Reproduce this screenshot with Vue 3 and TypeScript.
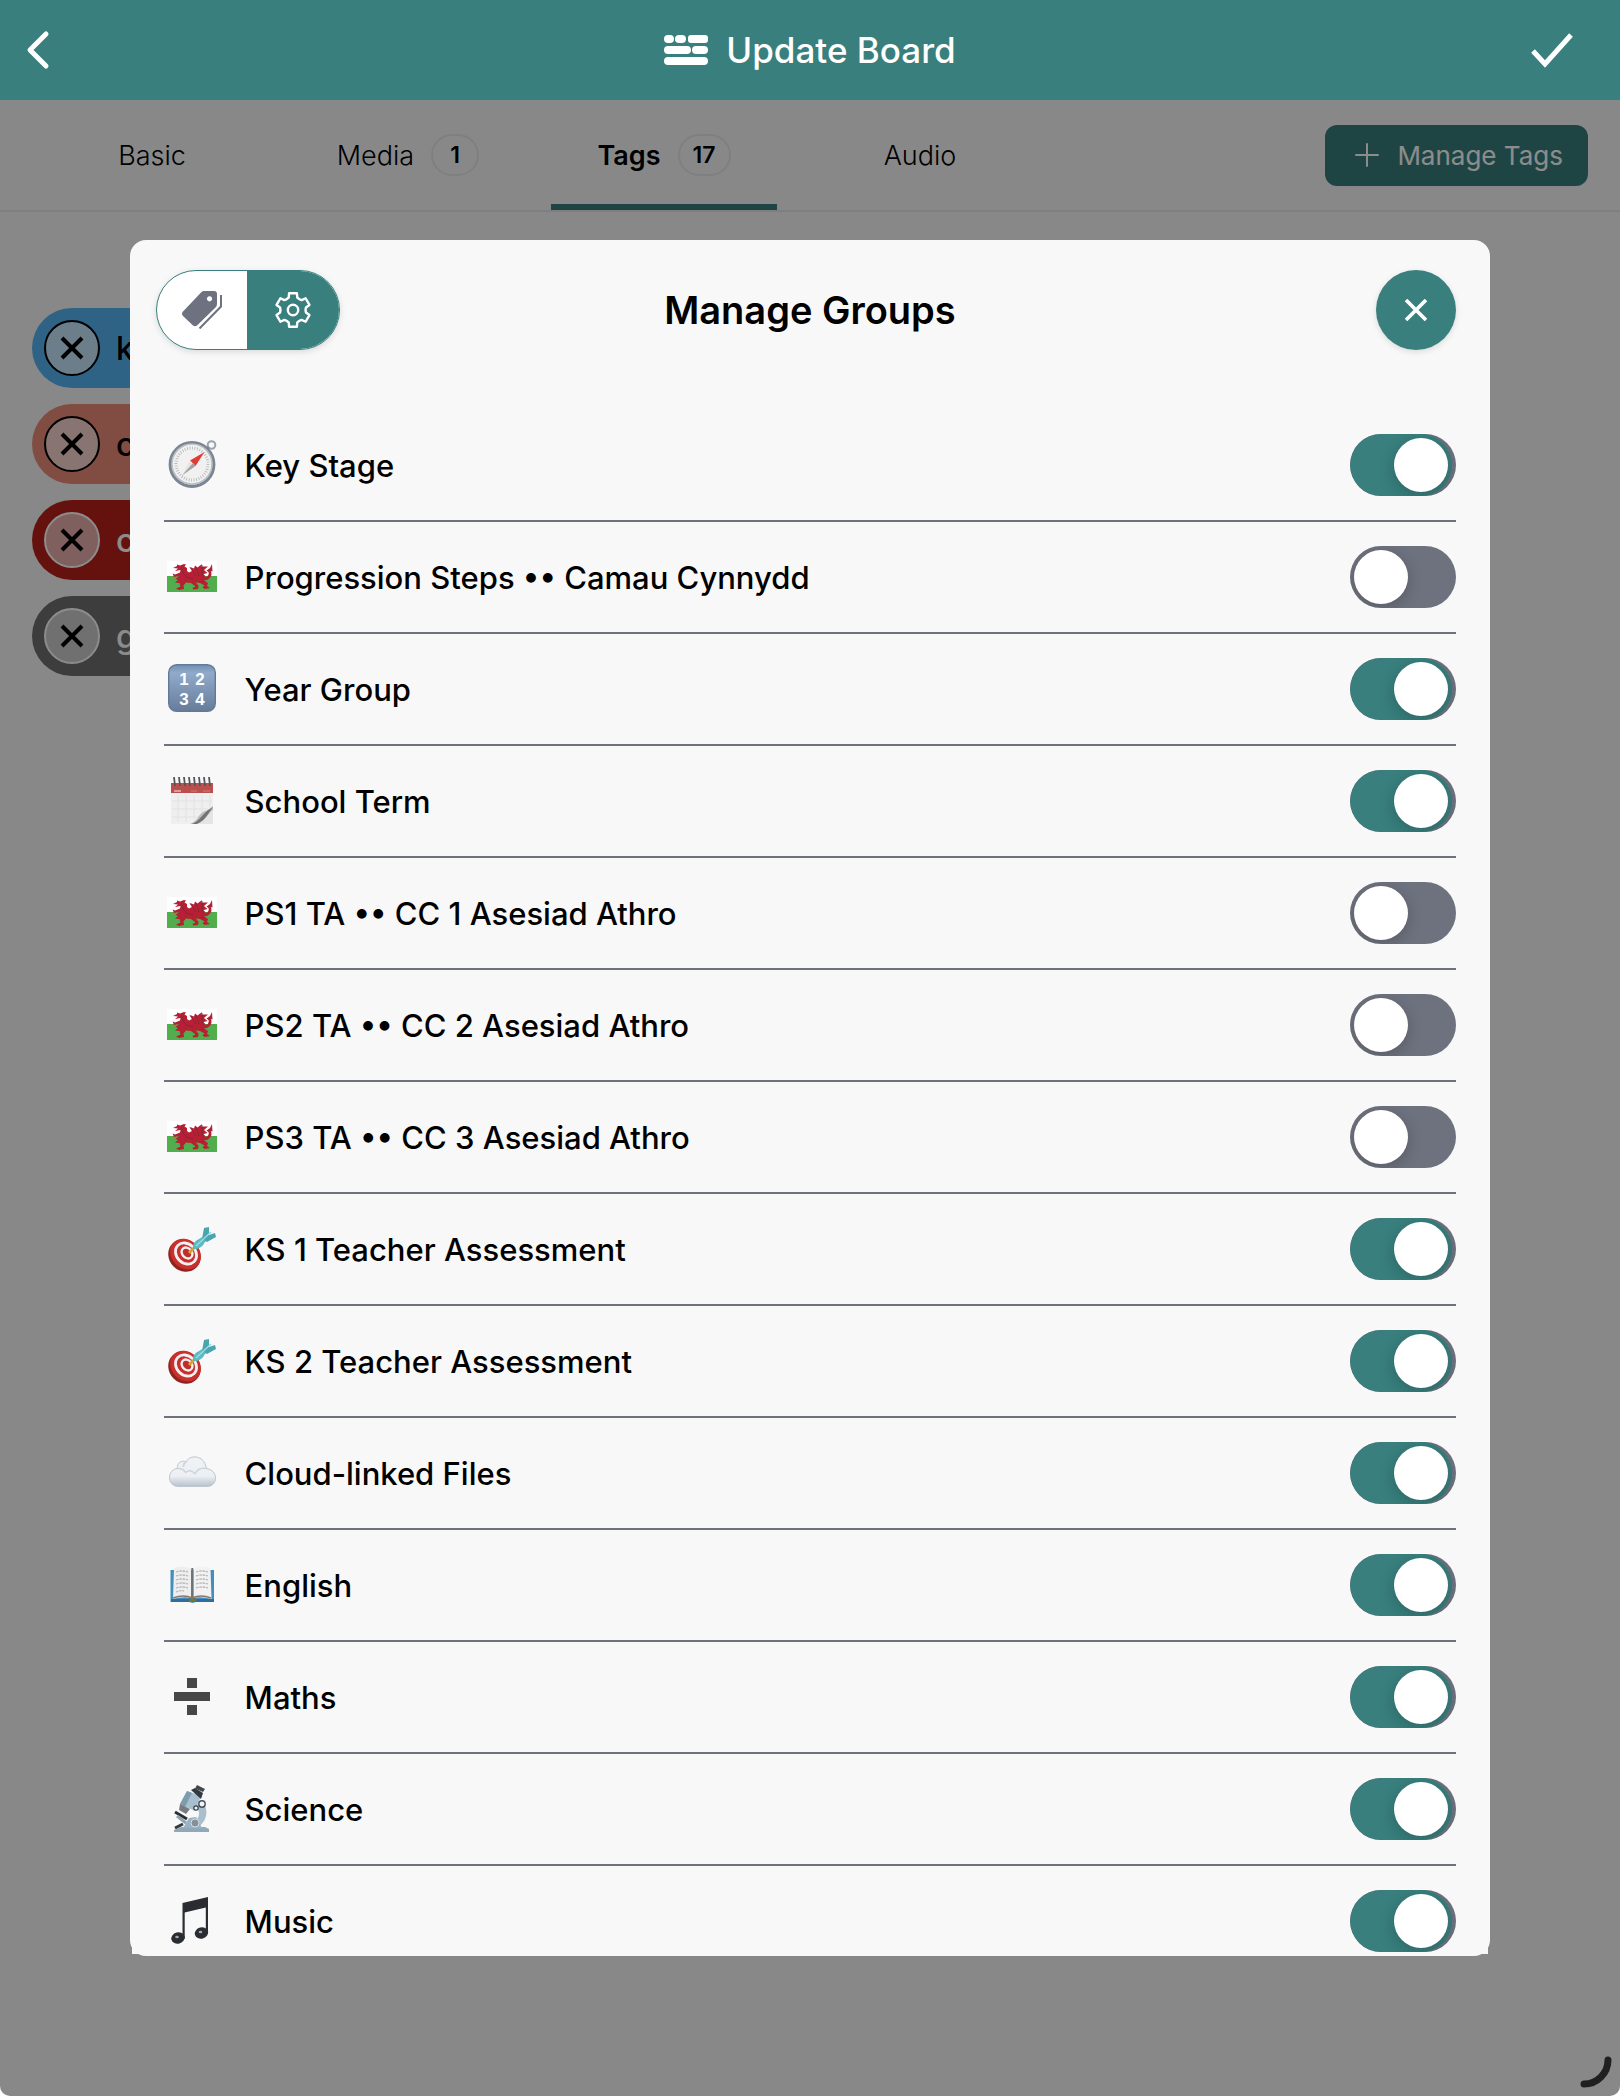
<script setup lang="ts">
import { ref } from 'vue'

interface Tab {
  label: string
  count?: number
}

interface Group {
  icon: string
  label: string
  on: boolean
}

const tabs: Tab[] = [
  { label: 'Basic' },
  { label: 'Media', count: 1 },
  { label: 'Tags', count: 17 },
  { label: 'Audio' },
]
const activeTab = ref('Tags')

const chips = [
  { text: 'k', tone: 'blue' },
  { text: 'c', tone: 'salmon' },
  { text: 'c', tone: 'red' },
  { text: 'g', tone: 'grey' },
]

const groups = ref<Group[]>([
  { icon: 'compass', label: 'Key Stage', on: true },
  { icon: 'wales', label: 'Progression Steps •• Camau Cynnydd', on: false },
  { icon: 'numbers', label: 'Year Group', on: true },
  { icon: 'calendar', label: 'School Term', on: true },
  { icon: 'wales', label: 'PS1 TA •• CC 1 Asesiad Athro', on: false },
  { icon: 'wales', label: 'PS2 TA •• CC 2 Asesiad Athro', on: false },
  { icon: 'wales', label: 'PS3 TA •• CC 3 Asesiad Athro', on: false },
  { icon: 'target', label: 'KS 1 Teacher Assessment', on: true },
  { icon: 'target', label: 'KS 2 Teacher Assessment', on: true },
  { icon: 'cloud', label: 'Cloud-linked Files', on: true },
  { icon: 'book', label: 'English', on: true },
  { icon: 'divide', label: 'Maths', on: true },
  { icon: 'microscope', label: 'Science', on: true },
  { icon: 'music', label: 'Music', on: true },
])

// Outline of a six-toothed gear centred on (19, 19)
function gearPoints(): string {
  const corners: [number, number][] = [
    [-28, 12.6],
    [-19, 13.2],
    [-13, 17.2],
    [13, 17.2],
    [19, 13.2],
    [28, 12.6],
  ]
  const out: string[] = []
  for (let tooth = 0; tooth < 6; tooth++) {
    for (const [offset, radius] of corners) {
      const a = ((tooth * 60 + offset) * Math.PI) / 180
      out.push(`${(19 + radius * Math.sin(a)).toFixed(2)},${(19 - radius * Math.cos(a)).toFixed(2)}`)
    }
  }
  return out.join(' ')
}
const gear = gearPoints()
const calendarRings = [8, 13, 18, 23, 28, 33, 38, 43]
</script>

<template>
  <div class="screen">
    <header class="topbar">
      <button class="icon-btn" type="button" aria-label="Back">
        <svg width="28" height="44" viewBox="0 0 28 44"><path d="M22 6 L6 22 L22 38" fill="none" stroke="#fff" stroke-width="5" stroke-linecap="round" stroke-linejoin="round" /></svg>
      </button>
      <h1 class="topbar-title">
        <svg width="44" height="30" viewBox="0 0 44 30" fill="#fff">
          <rect x="0" y="0" width="10" height="8" rx="4" />
          <rect x="11" y="0" width="11" height="8" rx="4" />
          <rect x="24" y="0" width="20" height="8" rx="3" />
          <rect x="0" y="11" width="27" height="8" rx="4" />
          <rect x="28" y="11" width="16" height="8" rx="4" />
          <rect x="0" y="22" width="44" height="8" rx="4" />
        </svg>
        Update Board
      </h1>
      <button class="icon-btn" type="button" aria-label="Save">
        <svg width="44" height="40" viewBox="0 0 44 40"><path d="M3 21 L15 34 L41 5" fill="none" stroke="#fff" stroke-width="5" /></svg>
      </button>
    </header>

    <main class="content">
      <div class="tabbar">
        <nav class="tabs">
          <button
            v-for="tab in tabs"
            :key="tab.label"
            type="button"
            class="tab"
            :class="{ active: tab.label === activeTab }"
            @click="activeTab = tab.label"
          >
            <span>{{ tab.label }}</span>
            <span v-if="tab.count" class="count">{{ tab.count }}</span>
          </button>
        </nav>
        <button class="manage" type="button">
          <svg width="24" height="24" viewBox="0 0 24 24"><path d="M12 1 V23 M1 12 H23" stroke="currentColor" stroke-width="2" stroke-linecap="round" /></svg>
          Manage Tags
        </button>
      </div>

      <ul class="chips">
        <li v-for="(chip, i) in chips" :key="i" class="chip" :class="chip.tone">
          <button class="chip-x" type="button" aria-label="Remove tag">
            <svg width="24" height="24" viewBox="0 0 24 24"><path d="M2 2 L22 22 M22 2 L2 22" stroke="#000" stroke-width="4" /></svg>
          </button>
          <span>{{ chip.text }}</span>
        </li>
      </ul>

      <div class="backdrop">
        <section class="modal" role="dialog" aria-labelledby="dialog-title">
          <div class="modal-head">
            <div class="segmented">
              <button class="seg" type="button" aria-label="Tags">
                <svg width="40" height="38" viewBox="0 0 40 38">
                  <path fill-rule="evenodd" d="M22 0 H32 Q35 0 35 3 V13 Q35 15 33.500 16.500 L15 34.500 Q13 36 11 34.500 L1 25 Q-1 22.500 1 20.500 L19.500 1 Q20.500 0 22 0 Z M27.500 5.200 a2.600 2.600 0 1 0 0.010 0 Z" fill="#6e7280" />
                  <path d="M39 4 V15.500 L17.500 37.500" fill="none" stroke="#6e7280" stroke-width="2" />
                </svg>
              </button>
              <button class="seg selected" type="button" aria-label="Groups">
                <svg width="38" height="38" viewBox="0 0 38 38" fill="none" stroke="#fff" stroke-width="2.400" stroke-linejoin="round">
                  <polygon :points="gear" />
                  <circle cx="19" cy="19" r="5.200" />
                </svg>
              </button>
            </div>
            <h2 id="dialog-title">Manage Groups</h2>
            <button class="close" type="button" aria-label="Close">
              <svg width="22" height="22" viewBox="0 0 22 22"><path d="M1 1 L21 21 M21 1 L1 21" stroke="#fff" stroke-width="3.600" /></svg>
            </button>
          </div>

          <div class="list-wrap">
            <ul class="list">
              <li v-for="(group, i) in groups" :key="i">
                <label class="row">
                  <svg class="emoji" width="50" height="50" viewBox="0 0 50 50" aria-hidden="true">
                    <g v-if="group.icon === 'compass'">
                      <circle cx="44.500" cy="5" r="3.800" fill="none" stroke="#9ca3ae" stroke-width="2" />
                      <path d="M37 11 L42 7" stroke="#858d98" stroke-width="3" />
                      <circle cx="25" cy="24.500" r="21.800" fill="#e9e9e9" stroke="#7b8491" stroke-width="3.200" />
                      <circle cx="25" cy="24" r="20" fill="#f1f1f1" stroke="#b9bfc6" stroke-width="1.600" />
                      <circle cx="25" cy="24" r="16" fill="none" stroke="#b5b5b5" stroke-width="3" stroke-dasharray="0.800 1.700" />
                      <path d="M37.500 12 L28.500 26 L23 20.500 Z" fill="#e23a35" />
                      <path d="M15 35.500 L28.500 26 L23 20.500 Z" fill="#e4e4e4" />
                      <path d="M15 35.500 L28.500 26 L26 23 Z" fill="#a2a2a2" />
                    </g>
                    <g v-else-if="group.icon === 'wales'">
                      <rect y="9" width="50" height="16" fill="#fff" />
                      <rect y="24" width="50" height="16" fill="#52ad4d" />
                      <path
                        d="M6 16 L10 14 L10 12.500 L13 13.500 L17 12 L19 12.500 L17.500 14.500 L20 16 L20 19 L22 20.500 L25 19 L23 15 L27 16.500 L28 13.500 L30.500 15.500 L35 12 L34.500 14.500 L41 14.500 L37 18 L40.500 21 L36.500 22 L39 25 Q42.500 23.500 41.500 20 L39.500 18.500 L43 16 L45 12 L45.500 19.500 L44 19 Q46 25 40 28 L37 28.500 L41 31 L40 34 L43 36 L38 37 L35.500 35.500 L37.500 33.500 L33 31 L29 30.500 L31.500 34 L31 37 L26.500 37.500 L25.500 36 L28.500 34.500 L24 31 L19 30.500 L16.500 33.500 L17 37 L12 38 L9 36.500 L13.500 34.500 L12.500 31 L8 30.500 L11 28 L8.500 27 L12 24 L7 25 L5.500 21.500 L8 22.500 L13 20.500 L13.500 18 L8 19 L11 16.500 Z"
                        fill="#b71f34"
                      />
                      <path d="M15 16 L16 21 L19 25 L26 27 M23 15.500 L29 24 M28.500 14.500 L32 24 M35 13 L35.500 24 M34 29 L37 30" fill="none" stroke="#7c2934" stroke-width="0.800" />
                    </g>
                    <g v-else-if="group.icon === 'numbers'">
                      <defs>
                        <linearGradient id="tile" x1="0" y1="0" x2="0" y2="1">
                          <stop offset="0" stop-color="#718fb1" />
                          <stop offset="0.180" stop-color="#91aacb" />
                          <stop offset="1" stop-color="#667c99" />
                        </linearGradient>
                      </defs>
                      <rect x="1.700" y="0.700" width="46.600" height="46.600" rx="8" fill="url(#tile)" stroke="#627a98" stroke-width="1.400" />
                      <g class="digits">
                        <text x="17" y="21">1</text>
                        <text x="33" y="21">2</text>
                        <text x="17" y="41">3</text>
                        <text x="33" y="41">4</text>
                      </g>
                    </g>
                    <g v-else-if="group.icon === 'calendar'">
                      <rect x="4" y="7" width="42" height="41" fill="#efefef" />
                      <path d="M11 19 V46 M19 19 V46 M27 19 V44 M35 19 V38 M43 19 V32 M5 25 H45 M5 33 H41 M5 41 H32" stroke="#e2e2e2" stroke-width="1" />
                      <rect x="4" y="7" width="42" height="10" fill="#b9504e" />
                      <path d="M7 15 H14" stroke="#dc9d9a" stroke-width="2" />
                      <path d="M24 15 H30 M36 15 H43" stroke="#c76f6c" stroke-width="1.400" />
                      <path v-for="x in calendarRings" :key="x" :d="`M${x} 10 L${x - 1} 1`" stroke="#53565b" stroke-width="1.800" />
                      <path d="M23 48 C31 45 31 39 36 36 C40 34 43 33 46 30 V48 Z" fill="#bcbcbc" />
                      <path d="M25 48 C34 44 34 38 46 31 C41 37 39 44 30 48 Z" fill="#737373" />
                      <path d="M30 48 C39 45 41 37 46 34 V48 Z" fill="#e5e5e5" />
                    </g>
                    <g v-else-if="group.icon === 'target'">
                      <ellipse cx="17.500" cy="31.500" rx="17" ry="15.500" transform="rotate(45 17.500 31.500)" fill="#912321" />
                      <ellipse cx="18.500" cy="30" rx="16.500" ry="14" transform="rotate(45 18.500 30)" fill="#c7302c" />
                      <ellipse cx="19" cy="29.500" rx="11.500" ry="9.500" transform="rotate(45 19 29.500)" fill="none" stroke="#f5eeee" stroke-width="2.800" />
                      <ellipse cx="20" cy="29" rx="6" ry="4.800" transform="rotate(45 20 29)" fill="#bb302c" stroke="#f5eeee" stroke-width="2.400" />
                      <path d="M22 29 L30 21" stroke="#d3a534" stroke-width="3" />
                      <path d="M26 25 Q25 18 32 15 L39 11 L41 14 L38 18 Q34 26 26 25 Z" fill="#5cbac4" />
                      <path d="M35 15 L37 4 L42 3 L42 11 L48 9 L49 13 L40 18 Z" fill="#4ba5b0" />
                      <path d="M29 22 L44 8" stroke="#93dce2" stroke-width="1.600" />
                    </g>
                    <g v-else-if="group.icon === 'cloud'">
                      <defs>
                        <linearGradient id="cloud" x1="0" y1="0" x2="0" y2="1">
                          <stop offset="0" stop-color="#f0f3f6" />
                          <stop offset="0.650" stop-color="#eceff3" />
                          <stop offset="1" stop-color="#b7c1cb" />
                        </linearGradient>
                      </defs>
                      <path d="M12 38.500 C5 38.500 2.500 34 2.500 29.500 C2.500 24.500 6 21 10.500 20.500 C9.500 15 15 11.500 19 14 C22 7 35 6.500 38.500 17 C39 18.500 39.500 20 39.500 20.500 C45 21.500 48.500 25 48.500 30 C48.500 35 45 38.500 40 38.500 Z" fill="url(#cloud)" stroke="#bdc6cf" stroke-width="1" />
                      <path d="M10.500 20.500 Q16 20 18 24 M19 14 Q16 16 16.500 19 M39.500 20.500 Q31 19 28 26 M18 25 Q23 20 28 26" fill="none" stroke="#ccd4dc" stroke-width="1.600" />
                    </g>
                    <g v-else-if="group.icon === 'book'">
                      <path d="M3.500 10 H47 V42 H29 L25.500 43 L22 42 H3.500 Z" fill="#428ebd" />
                      <path d="M4 39 H47 V42 H4 Z" fill="#2f6e98" />
                      <rect x="22" y="38" width="7" height="4" fill="#7b7430" />
                      <path d="M7 8 Q17 5 24 9 V38 Q16 36 6 39 Z" fill="#eeeeee" />
                      <path d="M43.500 8 Q33 5 26.500 9 V38 Q34 36 44.500 39 Z" fill="#f2f2f2" />
                      <path d="M25.300 8 V39" stroke="#69737a" stroke-width="2" />
                      <path d="M6 38 Q17 34 25 38 Q34 34 44 38" fill="none" stroke="#8a7770" stroke-width="1.400" />
                      <path d="M9 12 Q15 10 21 12 M9 16 Q15 14 21 16 M9 20 Q15 18 21 20 M9 24 Q15 22 21 24 M9 28 Q15 26 21 28 M9 32 Q13 30 17 31 M29 12 Q35 10 41 12 M29 16 Q35 14 41 16 M29 20 Q35 18 41 20 M29 24 Q35 22 41 24 M29 28 Q35 26 41 28" fill="none" stroke="#b8b8bd" stroke-width="1.300" stroke-dasharray="2.500 0.800" />
                    </g>
                    <g v-else-if="group.icon === 'divide'" fill="#474747">
                      <rect x="7" y="20" width="36" height="9" />
                      <rect x="20" y="6" width="10" height="10" />
                      <rect x="20" y="33" width="10" height="10" />
                    </g>
                    <g v-else-if="group.icon === 'microscope'">
                      <path d="M34 17 C43 24 40 38 31 43 L25 40 C33 35 34 27 29 23 Z" fill="#a9bfcd" />
                      <path d="M7 46 L14 43 L38 43 L42 45 V48 H7 Z" fill="#8fa9ba" />
                      <path d="M16 44 L22 34 L29 33 L35 44 Z" fill="#9ab3c2" />
                      <circle cx="28" cy="39" r="4" fill="#848f97" stroke="#d0dce3" stroke-width="1" />
                      <path d="M20 7 L34 12 L28 27 L13 20 Z" fill="#a6c0cf" />
                      <path d="M20 7 L25 9 L18 23 L13 20 Z" fill="#7f9caf" />
                      <path d="M24 6 L28 4 L36 9 L34 15 Z" fill="#333a3f" />
                      <path d="M30 1 L38 5 L36 8 L28 4.500 Z" fill="#42494e" />
                      <path d="M13 20 L23 25 L19 30 L12 26 Z" fill="#767c82" />
                      <circle cx="35" cy="20" r="3.200" fill="#f3f5f6" stroke="#47515a" stroke-width="1.400" />
                      <circle cx="29" cy="24" r="2.200" fill="#eef1f2" stroke="#35404a" stroke-width="1.200" />
                      <path d="M8 28 L20 35" stroke="#2b2f32" stroke-width="3" />
                      <path d="M10 32 L19 39" stroke="#8ea4b1" stroke-width="3" />
                      <path d="M8 44 L16 40" stroke="#34393d" stroke-width="3" />
                    </g>
                    <g v-else fill="#2a2c31">
                      <path d="M15.500 7 L41 1 V38 H38.800 V11.500 L17.700 16.500 V43 H15.500 Z" />
                      <ellipse cx="11" cy="42" rx="6.800" ry="5.600" transform="rotate(-15 11 42)" />
                      <ellipse cx="34.500" cy="37" rx="6.800" ry="5.600" transform="rotate(-15 34.500 37)" />
                      <ellipse cx="10" cy="41" rx="1.800" ry="1.200" fill="#9fa9b2" />
                      <ellipse cx="33.500" cy="36" rx="1.800" ry="1.200" fill="#9fa9b2" />
                    </g>
                  </svg>
                  <span class="row-label">{{ group.label }}</span>
                  <input v-model="group.on" class="switch" type="checkbox" />
                </label>
              </li>
            </ul>
          </div>
        </section>
      </div>

      <svg class="corner-arc" width="32" height="32" viewBox="0 0 32 32" aria-hidden="true">
        <path d="M28 4 A24 24 0 0 1 4 28" fill="none" stroke="#202020" stroke-width="7" stroke-linecap="round" />
      </svg>
    </main>
  </div>
</template>

<style>
body {
  margin: 0;
  background: #fff;
}
</style>

<style scoped>
.screen {
  display: flex;
  flex-direction: column;
  height: 100vh;
  border-radius: 0 0 10px 10px;
  overflow: hidden;
  background: #f8f8f8;
  color: #000;
  font-family: Inter, "Liberation Sans", sans-serif;
}
* {
  box-sizing: border-box;
}
button {
  border: 0;
  padding: 0;
  background: none;
  font: inherit;
  color: inherit;
  display: flex;
  align-items: center;
  justify-content: center;
}
h1,
h2,
ul {
  margin: 0;
  padding: 0;
  list-style: none;
}
.topbar {
  flex: none;
  display: flex;
  align-items: center;
  justify-content: space-between;
  height: 100px;
  padding: 0 24px;
  background: #387f7d;
  color: #fff;
}
.icon-btn {
  width: 88px;
  height: 88px;
}
.icon-btn:first-child {
  justify-content: flex-start;
}
.topbar-title {
  display: flex;
  align-items: center;
  gap: 18px;
  font-size: 35px;
  line-height: 44px;
  font-weight: 450;
}
.content {
  position: relative;
  flex: 1;
  min-height: 0;
}
.tabbar {
  display: flex;
  justify-content: space-between;
  align-items: center;
  height: 112px;
  padding: 0 32px 0 39px;
  border-bottom: 2px solid #e8e8e8;
}
.tabs {
  flex: 0 1 994px;
  display: grid;
  grid-template-columns: repeat(4, 1fr);
  gap: 30px;
  align-self: stretch;
}
.tab {
  gap: 17px;
  border-bottom: 6px solid transparent;
  border-top: 6px solid transparent;
  font-size: 27px;
  font-weight: 300;
}
.tab.active {
  border-bottom-color: #387f7d;
  font-weight: 600;
}
.count {
  min-width: 48px;
  height: 42px;
  padding: 0 13px;
  border: 2px solid #e8e8e8;
  border-radius: 21px;
  font-size: 23px;
  line-height: 38px;
  font-weight: 600;
}
.manage {
  flex: none;
  gap: 18px;
  height: 61px;
  padding: 0 25px 0 30px;
  border-radius: 12px;
  background: #387f7d;
  color: #fff;
  font-size: 26px;
  font-weight: 400;
}
.chips {
  display: flex;
  flex-direction: column;
  align-items: flex-start;
  gap: 16px;
  padding: 96px 32px 0;
}
.chip {
  display: flex;
  align-items: center;
  gap: 16px;
  width: 240px;
  height: 80px;
  padding: 0 12px;
  border-radius: 40px;
  font-size: 32px;
  font-weight: 500;
}
.chip-x {
  width: 56px;
  height: 56px;
  border: 2px solid currentColor;
  border-radius: 50%;
  background: rgba(255, 255, 255, 0.65);
}
.blue {
  background: #57b4f2;
}
.salmon {
  background: #eb8a78;
}
.red {
  background: #b91f18;
  color: #fff;
}
.grey {
  background: #6f6f6f;
  color: #fff;
}
.backdrop {
  position: absolute;
  inset: 0;
  display: flex;
  justify-content: center;
  padding: 140px 0;
  background: rgba(0, 0, 0, 0.45);
}
.modal {
  display: flex;
  flex-direction: column;
  width: 84%;
  border: 2px solid #f8f8f8;
  border-radius: 16px;
  background: #f8f8f8;
}
.modal-head {
  display: grid;
  grid-template-columns: 1fr auto 1fr;
  align-items: center;
  padding: 28px 24px 60px;
}
h2 {
  font-size: 38px;
  line-height: 48px;
  font-weight: 600;
}
.segmented {
  display: flex;
  width: 184px;
  height: 80px;
  border: 1px solid #387f7d;
  border-radius: 40px;
  overflow: hidden;
  background: #fff;
  box-shadow: 0 2px 6px rgba(0, 0, 0, 0.12);
}
.seg {
  width: 90px;
}
.selected {
  flex: 1;
  background: #387f7d;
}
.close {
  justify-self: end;
  width: 80px;
  height: 80px;
  margin-right: 8px;
  border-radius: 50%;
  background: #387f7d;
  box-shadow: 0 2px 6px rgba(0, 0, 0, 0.12);
}
.list-wrap {
  flex: 1;
  min-height: 0;
  overflow: hidden;
  padding: 0 32px;
  background: #f8f8f8;
}
.row {
  display: flex;
  align-items: center;
  gap: 28px;
  height: 112px;
  padding-left: 3px;
  border-bottom: 2px solid #6e7280;
}
.emoji {
  flex: none;
}
.digits {
  font-family: "Liberation Sans", sans-serif;
  font-size: 17px;
  font-weight: 700;
  fill: #fff;
  text-anchor: middle;
}
.row-label {
  flex: 1;
  padding-top: 2px;
  font-size: 31px;
  line-height: 40px;
  font-weight: 480;
}
.switch {
  appearance: none;
  position: relative;
  flex: none;
  width: 106px;
  height: 62px;
  margin: 0;
  border-radius: 31px;
  background: #6e727e;
  overflow: hidden;
}
.switch::before {
  content: '';
  position: absolute;
  inset: 0 4px 0 0;
  border-radius: 31px;
}
.switch::after {
  content: '';
  position: absolute;
  top: 4px;
  left: 4px;
  width: 54px;
  height: 54px;
  border-radius: 50%;
  background: #fff;
  box-shadow: 0 4px 16px rgba(0, 0, 0, 0.2);
}
.switch:checked::before {
  background: #387f7d;
}
.switch:checked::after {
  left: 44px;
}
.corner-arc {
  position: absolute;
  right: 8px;
  bottom: 8px;
}
</style>
